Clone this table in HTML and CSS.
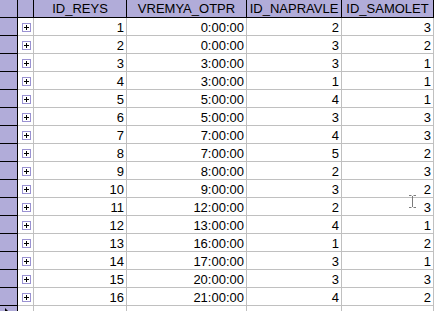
FILE: index.html
```html
<!DOCTYPE html>
<html>
<head>
<meta charset="utf-8">
<link rel="stylesheet" href="styles.css">
</head>
<body>
<div class="grid">
  <div class="ind hd"></div><div class="hd"></div><div class="hd">ID_REYS</div><div class="hd">VREMYA_OTPR</div><div class="hd">ID_NAPRAVLE</div><div class="hd">ID_SAMOLET</div>

  <div class="ind"></div><div class="exp"><span class="box"></span></div><div class="c">1</div><div class="c">0:00:00</div><div class="c">2</div><div class="c">3</div>
  <div class="ind"></div><div class="exp"><span class="box"></span></div><div class="c">2</div><div class="c">0:00:00</div><div class="c">3</div><div class="c">2</div>
  <div class="ind"></div><div class="exp"><span class="box"></span></div><div class="c">3</div><div class="c">3:00:00</div><div class="c">3</div><div class="c">1</div>
  <div class="ind"></div><div class="exp"><span class="box"></span></div><div class="c">4</div><div class="c">3:00:00</div><div class="c">1</div><div class="c">1</div>
  <div class="ind"></div><div class="exp"><span class="box"></span></div><div class="c">5</div><div class="c">5:00:00</div><div class="c">4</div><div class="c">1</div>
  <div class="ind"></div><div class="exp"><span class="box"></span></div><div class="c">6</div><div class="c">5:00:00</div><div class="c">3</div><div class="c">3</div>
  <div class="ind"></div><div class="exp"><span class="box"></span></div><div class="c">7</div><div class="c">7:00:00</div><div class="c">4</div><div class="c">3</div>
  <div class="ind"></div><div class="exp"><span class="box"></span></div><div class="c">8</div><div class="c">7:00:00</div><div class="c">5</div><div class="c">2</div>
  <div class="ind"></div><div class="exp"><span class="box"></span></div><div class="c">9</div><div class="c">8:00:00</div><div class="c">2</div><div class="c">3</div>
  <div class="ind"></div><div class="exp"><span class="box"></span></div><div class="c">10</div><div class="c">9:00:00</div><div class="c">3</div><div class="c">2</div>
  <div class="ind"></div><div class="exp"><span class="box"></span></div><div class="c">11</div><div class="c">12:00:00</div><div class="c">2</div><div class="c">3</div>
  <div class="ind"></div><div class="exp"><span class="box"></span></div><div class="c">12</div><div class="c">13:00:00</div><div class="c">4</div><div class="c">1</div>
  <div class="ind"></div><div class="exp"><span class="box"></span></div><div class="c">13</div><div class="c">16:00:00</div><div class="c">1</div><div class="c">2</div>
  <div class="ind"></div><div class="exp"><span class="box"></span></div><div class="c">14</div><div class="c">17:00:00</div><div class="c">3</div><div class="c">1</div>
  <div class="ind"></div><div class="exp"><span class="box"></span></div><div class="c">15</div><div class="c">20:00:00</div><div class="c">3</div><div class="c">3</div>
  <div class="ind"></div><div class="exp"><span class="box"></span></div><div class="c">16</div><div class="c">21:00:00</div><div class="c">4</div><div class="c">2</div>

  <div class="ind newrow"><span class="tri"></span></div><div class="exp"></div><div class="c"></div><div class="c"></div><div class="c"></div><div class="c"></div>
</div>
<svg class="ibeam" width="7" height="13" viewBox="0 0 7 13"><path d="M0 0.5H2.5M4.5 0.5H7M3.5 1V12M0 12.5H2.5M4.5 12.5H7" stroke="#7a7a7a" stroke-width="1" fill="none"/></svg>
</body>
</html>
```

FILE: styles.css
```css
html, body {
  margin: 0;
  padding: 0;
  background: #ffffff;
  overflow: hidden;
}
body {
  width: 435px;
  height: 311px;
  position: relative;
  font-family: "Liberation Sans", Arial, sans-serif;
  font-size: 13px;
  color: #000;
}
.grid {
  display: grid;
  grid-template-columns: 18px 16px 93px 120px 95px 92px;
  grid-auto-rows: 18px;
  width: 434px;
}
.grid > div {
  box-sizing: border-box;
  border-right: 1px solid #c0c0c0;
  border-bottom: 1px solid #c0c0c0;
  overflow: hidden;
  white-space: nowrap;
}
.grid > .hd {
  background: #b1acd9;
  border-right-color: #000;
  border-bottom-color: #000;
  text-align: center;
  line-height: 17px;
}
.grid > .ind {
  background: #b1acd9;
  border-right-color: #000;
  border-bottom-color: #000;
}
.c {
  text-align: right;
  padding-right: 2px;
  line-height: 19px;
}
.exp {
  display: flex;
  align-items: flex-start;
  justify-content: flex-start;
}
.box {
  box-sizing: border-box;
  width: 9px;
  height: 9px;
  margin: 5px 0 0 4px;
  border: 1px solid #9a92d2;
  background: #fff;
  position: relative;
}
.box::before {
  content: "";
  position: absolute;
  left: 1px;
  top: 3px;
  width: 5px;
  height: 1px;
  background: #000;
}
.box::after {
  content: "";
  position: absolute;
  left: 3px;
  top: 1px;
  width: 1px;
  height: 5px;
  background: #000;
}
.newrow {
  display: flex;
  align-items: flex-start;
}
.tri {
  width: 0;
  height: 0;
  margin: 2px 0 0 5px;
  border-left: 4px solid #000;
  border-top: 4px solid transparent;
  border-bottom: 4px solid transparent;
}
.ibeam {
  position: absolute;
  left: 409px;
  top: 195px;
}
```
